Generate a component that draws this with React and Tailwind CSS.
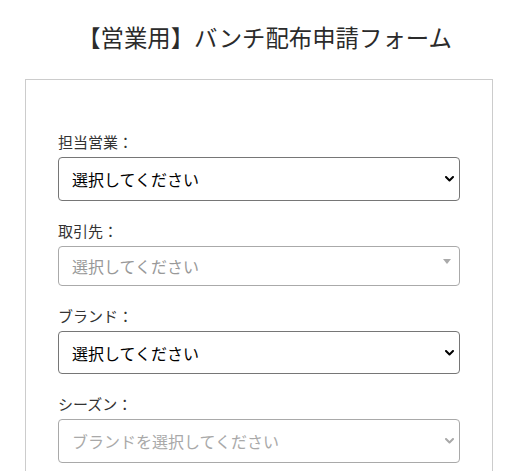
import React from "react";

const Chevron = ({ color }) => (
  <svg
    className="pointer-events-none absolute right-[5px] top-1/2 -translate-y-1/2"
    width="9"
    height="6"
    viewBox="0 0 9 6"
  >
    <path d="M1 1 L4.5 4.5 L8 1" fill="none" stroke={color} strokeWidth="2" strokeLinecap="round" strokeLinejoin="round" />
  </svg>
);

const Field = ({ label, children }) => (
  <div className="mb-[18px]">
    <label className="block text-[15px] leading-6 text-[#333] mb-[3px]">{label}</label>
    {children}
  </div>
);

export default function App() {
  return (
    <div
      className="min-h-[471px] bg-white"
      style={{ fontFamily: '"Noto Sans CJK JP", "Noto Sans", sans-serif' }}
    >
      <h1 className="pt-[19px] text-center text-[23.4px] leading-9 text-[#2b2b2b] font-normal">
        【営業用】バンチ配布申請フォーム
      </h1>
      <div className="mx-[25px] mt-[24px] w-[468px] border border-[#cccccc] px-8 pt-[50px] pb-6">
        <Field label="担当営業：">
          <div className="relative h-[44px] w-full rounded-[4px] border border-[#767676] bg-white">
            <div className="flex h-full items-center pl-[13px] text-[16px] text-black">選択してください</div>
            <Chevron color="#000" />
          </div>
        </Field>
        <Field label="取引先：">
          <div className="relative h-[40px] w-full rounded-[4px] border border-[#aaaaaa] bg-white">
            <div className="flex h-full items-center pl-[13px] text-[16px] text-[#999]">選択してください</div>
            <div className="pointer-events-none absolute right-[8px] top-[12px] h-0 w-0 border-x-[4px] border-t-[5px] border-x-transparent border-t-[#aaaaaa]" />
          </div>
        </Field>
        <Field label="ブランド：">
          <div className="relative h-[43px] w-full rounded-[4px] border border-[#767676] bg-white">
            <div className="flex h-full items-center pl-[13px] text-[16px] text-black">選択してください</div>
            <Chevron color="#000" />
          </div>
        </Field>
        <Field label="シーズン：">
          <div className="relative h-[44px] w-full rounded-[4px] border border-[#a9a9a9] bg-white">
            <div className="flex h-full items-center pl-[13px] text-[16px] text-[#a9a9a9]">ブランドを選択してください</div>
            <Chevron color="#a9a9a9" />
          </div>
        </Field>
      </div>
    </div>
  );
}
